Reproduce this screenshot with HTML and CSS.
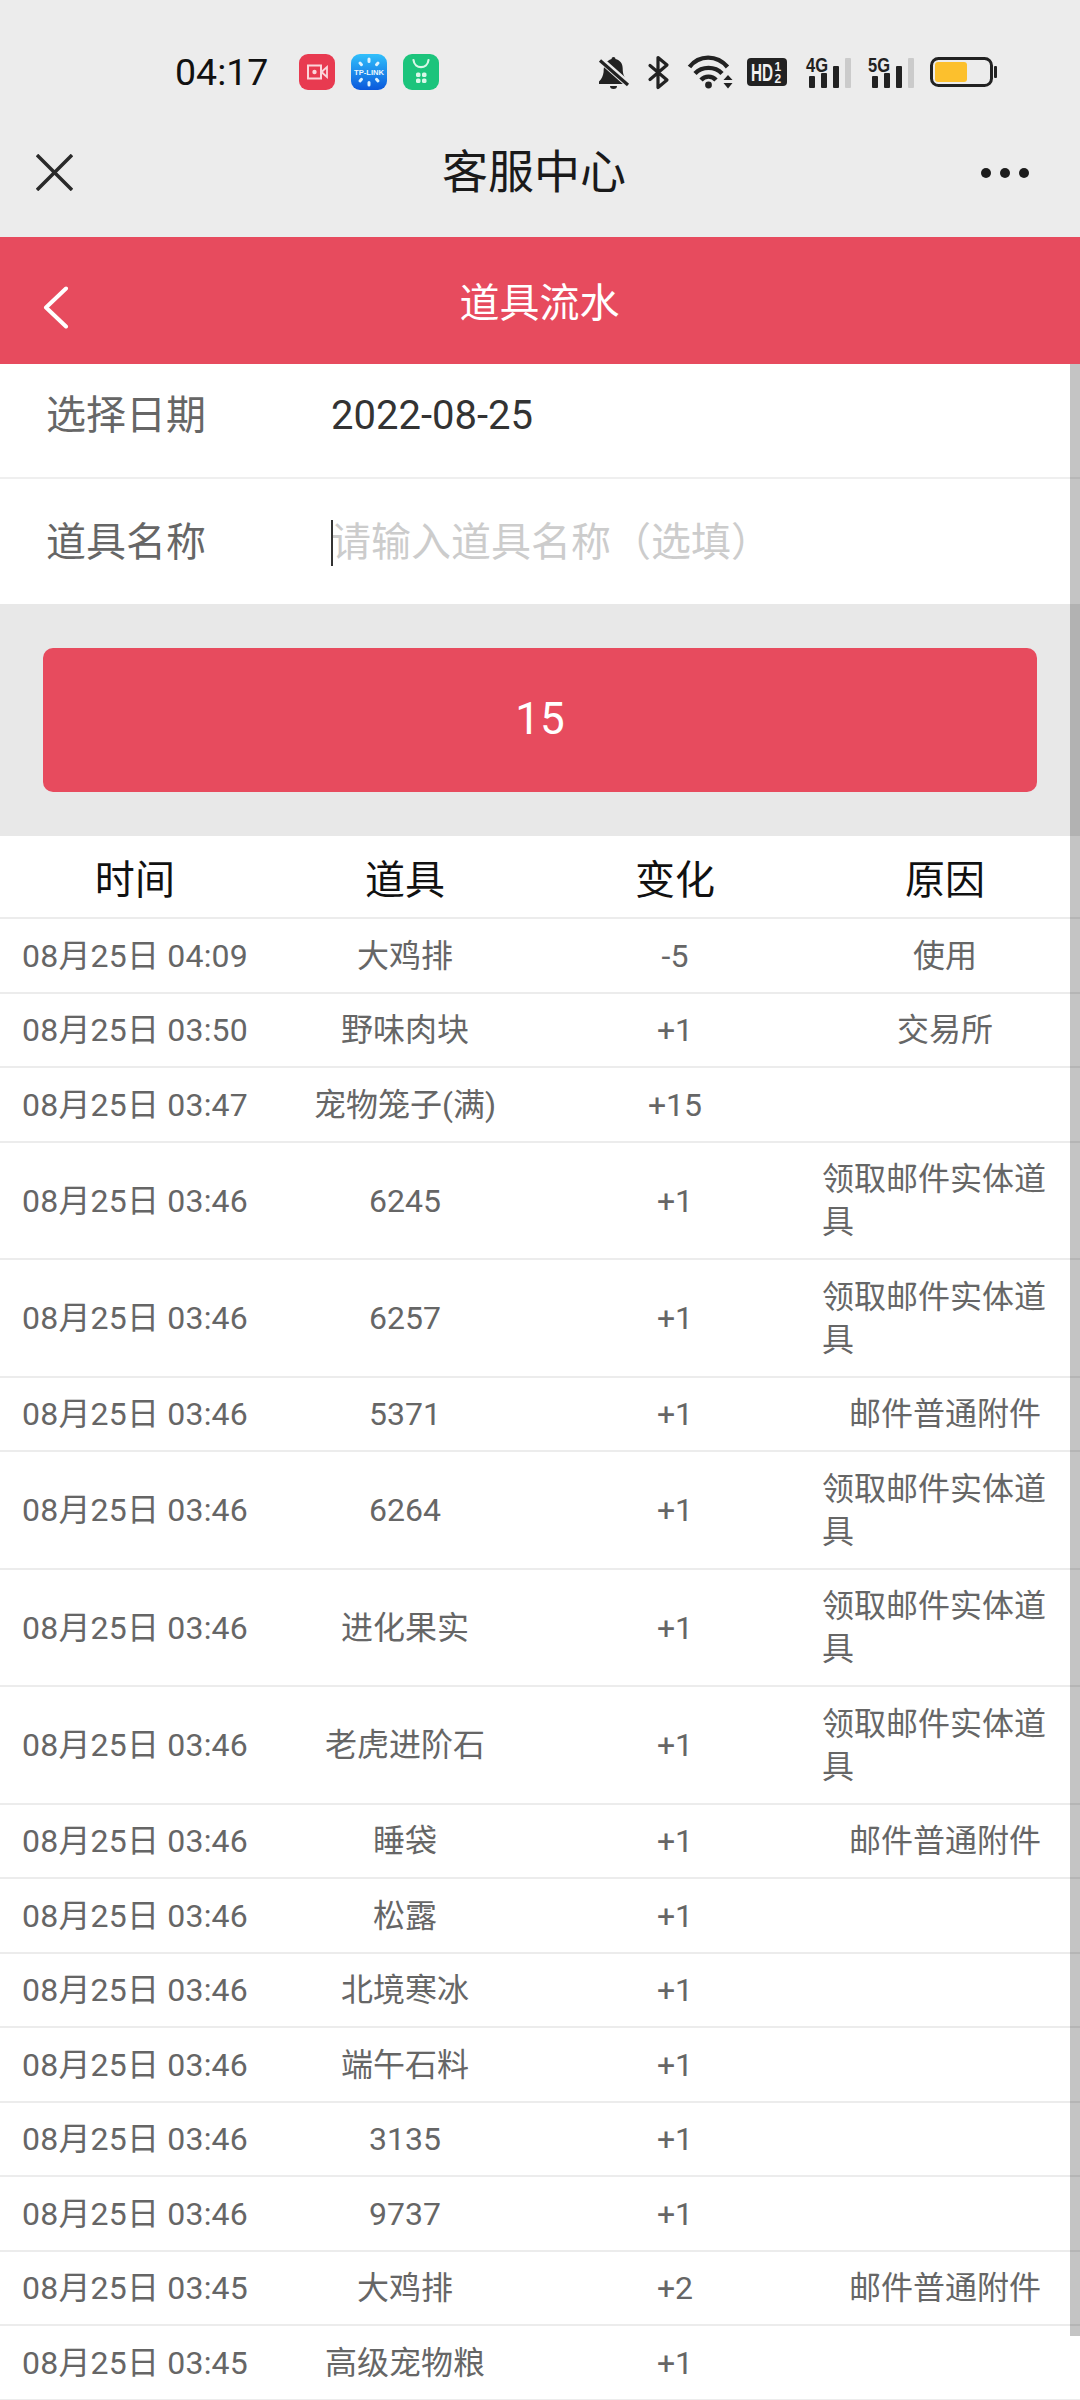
FILE: index.html
```html
<!DOCTYPE html>
<html lang="zh-CN">
<head>
<meta charset="utf-8">
<title>道具流水</title>
<link rel="stylesheet" href="styles.css">
</head>
<body>
<div class="page">
  <header class="chrome">
    <div class="status">
      <div class="status-left">
        <span class="time">04:17</span>
        <svg class="app" viewBox="0 0 36 36"><rect width="36" height="36" rx="9" fill="#e83a50"/><rect x="9" y="11.500" width="13" height="13" fill="none" stroke="#fbd5da" stroke-width="2"/><circle cx="15.500" cy="18" r="2.200" fill="#fbd5da"/><path d="M23.500 17l4.500-4v10l-4.500-4z" fill="none" stroke="#fbd5da" stroke-width="1.800"/></svg>
        <svg class="app" viewBox="0 0 36 36"><defs><linearGradient id="tp" x1="0" y1="0" x2="0" y2="1"><stop offset="0" stop-color="#31c0fb"/><stop offset="1" stop-color="#0a58dc"/></linearGradient></defs><rect width="36" height="36" rx="9" fill="url(#tp)"/><g stroke="#dff3ff" stroke-width="3" stroke-linecap="round"><path d="M18 5v2.500M18 28.500v2.500M9 9l1.500 1.700M27 9l-1.500 1.700M9 27l1.500-1.700M27 27l-1.500-1.700"/></g><text x="18" y="20.500" text-anchor="middle" class="tp-text" textLength="30" lengthAdjust="spacingAndGlyphs">TP-LINK</text></svg>
        <svg class="app" viewBox="0 0 36 36"><rect width="36" height="36" rx="9" fill="#1cc47c"/><path d="M10.500 6c1 9.500 14 9.500 15 0" fill="none" stroke="#d9f7e8" stroke-width="2.200" stroke-linecap="round"/><g fill="#d9f7e8"><rect x="13" y="18.500" width="4.500" height="4.500" rx="1.600"/><rect x="19" y="18.500" width="4.500" height="4.500" rx="1.600"/><rect x="13" y="24.500" width="4.500" height="4.500" rx="1.600"/><rect x="19" y="24.500" width="4.500" height="4.500" rx="1.600"/></g></svg>
      </div>
      <div class="status-right">
        <svg class="ic ic-bell" viewBox="0 0 30 33"><path d="M12.500 3a2 2 0 0 1 4 0c4.500 1 7.200 4.500 7.200 9.500 0 5.500 1.300 9 5.300 13v2.500H0v-2.500c2.800-2.800 4-5.500 4.600-9.500 0-3 .5-6 1.400-8.500 1.500-2 4-3.500 6.500-4.500z" fill="#222"/><path d="M11 30h7a3.500 3 0 0 1-7 0z" fill="#222"/><path d="M-1 1.500L31 30" stroke="#ececec" stroke-width="6.500"/><path d="M1 4.500L29 29" stroke="#222" stroke-width="3.200"/></svg>
        <svg class="ic ic-bt" viewBox="0 0 21 33"><path d="M2 9.500L19 24 10 31.500V1.500L19 9 2 23.500" fill="none" stroke="#222" stroke-width="3.200" stroke-linejoin="round" stroke-linecap="round"/></svg>
        <svg class="ic ic-wifi" viewBox="0 0 45 33"><g fill="none" stroke="#222" stroke-width="4.400"><path d="M1.500 11C11 -1.500 29 -1.500 39.500 11"/><path d="M7 17.500c7-7.500 20-7.500 27 0"/><path d="M13 24c4-4.500 11-4.500 15 0"/></g><circle cx="20.500" cy="29" r="3.400" fill="#222"/><path d="M35.500 24l4.500-5 4.500 5z" fill="#222"/><path d="M35.500 27h9L40 32.500z" fill="#222"/></svg>
        <svg class="ic ic-hd" viewBox="0 0 40 28"><rect width="40" height="28" rx="4" fill="#222"/><text x="4" y="22.500" class="hd-text" textLength="22" lengthAdjust="spacingAndGlyphs">HD</text><text x="27.500" y="13" class="hd-small">1</text><text x="27.500" y="24.500" class="hd-small">2</text></svg>
        <svg class="ic ic-net" viewBox="0 0 46 33"><text x="0" y="15.500" class="net-text" textLength="22" lengthAdjust="spacingAndGlyphs">4G</text><g fill="#222"><rect x="3" y="20" width="6" height="12" rx="1"/><rect x="15" y="17" width="6" height="15" rx="1"/><rect x="27" y="10" width="6" height="22" rx="1"/></g><rect x="39" y="2" width="6" height="30" rx="1" fill="#cbcbcb"/></svg>
        <svg class="ic ic-net" viewBox="0 0 46 33"><text x="0" y="15.500" class="net-text" textLength="22" lengthAdjust="spacingAndGlyphs">5G</text><g fill="#222"><rect x="4" y="20" width="6" height="12" rx="1"/><rect x="16" y="17" width="6" height="15" rx="1"/><rect x="28" y="10" width="6" height="22" rx="1"/></g><rect x="40" y="2" width="6" height="30" rx="1" fill="#cbcbcb"/></svg>
        <svg class="ic ic-batt" viewBox="0 0 67 30"><rect x="1.500" y="1.500" width="60" height="27" rx="7" fill="none" stroke="#222" stroke-width="3"/><rect x="5" y="5" width="32" height="20" rx="3" fill="#fcc02d"/><rect x="64" y="9" width="3" height="12" rx="1" fill="#222"/></svg>
      </div>
    </div>
    <nav class="navbar">
      <svg class="nav-close" viewBox="0 0 37 37"><path d="M1 1l35 35M36 1L1 36" stroke="#2a2a2a" stroke-width="3.500"/></svg>
      <h1 class="nav-title">客服中心</h1>
      <div class="nav-dots"><i></i><i></i><i></i></div>
    </nav>
  </header>

  <div class="appbar">
    <svg class="back" viewBox="0 0 26 43"><path d="M23 2.500L3 21.500l20 19" fill="none" stroke="#fff" stroke-width="4" stroke-linecap="round" stroke-linejoin="round"/></svg>
    <h2 class="appbar-title">道具流水</h2>
  </div>

  <section class="form">
    <div class="field field-date">
      <span class="label">选择日期</span>
      <span class="value">2022-08-25</span>
    </div>
    <div class="field field-name">
      <span class="label">道具名称</span>
      <span class="value placeholder"><i class="caret"></i>请输入道具名称（选填）</span>
    </div>
  </section>

  <div class="band">
    <div class="btn">15</div>
  </div>

  <section class="list">
    <div class="row head"><span>时间</span><span>道具</span><span>变化</span><span>原因</span></div>
    <div class="row"><span>08月25日 04:09</span><span>大鸡排</span><span>-5</span><span>使用</span></div>
    <div class="row"><span>08月25日 03:50</span><span>野味肉块</span><span>+1</span><span>交易所</span></div>
    <div class="row"><span>08月25日 03:47</span><span>宠物笼子(满)</span><span>+15</span><span></span></div>
    <div class="row"><span>08月25日 03:46</span><span>6245</span><span>+1</span><span><b class="why">领取邮件实体道具</b></span></div>
    <div class="row"><span>08月25日 03:46</span><span>6257</span><span>+1</span><span><b class="why">领取邮件实体道具</b></span></div>
    <div class="row"><span>08月25日 03:46</span><span>5371</span><span>+1</span><span>邮件普通附件</span></div>
    <div class="row"><span>08月25日 03:46</span><span>6264</span><span>+1</span><span><b class="why">领取邮件实体道具</b></span></div>
    <div class="row"><span>08月25日 03:46</span><span>进化果实</span><span>+1</span><span><b class="why">领取邮件实体道具</b></span></div>
    <div class="row"><span>08月25日 03:46</span><span>老虎进阶石</span><span>+1</span><span><b class="why">领取邮件实体道具</b></span></div>
    <div class="row"><span>08月25日 03:46</span><span>睡袋</span><span>+1</span><span>邮件普通附件</span></div>
    <div class="row"><span>08月25日 03:46</span><span>松露</span><span>+1</span><span></span></div>
    <div class="row"><span>08月25日 03:46</span><span>北境寒冰</span><span>+1</span><span></span></div>
    <div class="row"><span>08月25日 03:46</span><span>端午石料</span><span>+1</span><span></span></div>
    <div class="row"><span>08月25日 03:46</span><span>3135</span><span>+1</span><span></span></div>
    <div class="row"><span>08月25日 03:46</span><span>9737</span><span>+1</span><span></span></div>
    <div class="row"><span>08月25日 03:45</span><span>大鸡排</span><span>+2</span><span>邮件普通附件</span></div>
    <div class="row"><span>08月25日 03:45</span><span>高级宠物粮</span><span>+1</span><span></span></div>
  </section>

  <div class="scrollbar"></div>
</div>
</body>
</html>
```
FILE: styles.css
```css
* { box-sizing: border-box; }
html, body { margin: 0; padding: 0; height: 2400px; overflow: hidden; background: #fff; }
body { font-family: Roboto, "Noto Sans CJK SC", "Noto Sans", sans-serif; }
.page { position: relative; width: 1080px; height: 2400px; overflow: hidden; }

/* system chrome */
.chrome { height: 237px; background: #ececec; }
.status { height: 108px; padding: 54px 83px 0 175px; display: flex; justify-content: space-between; align-items: flex-start; }
.status-left { display: flex; align-items: center; height: 36px; }
.time { font-size: 37.500px; line-height: 36px; color: #111; width: 94px; margin-right: 30px; }
.app { width: 36px; height: 36px; margin-right: 16px; display: block; }
.app:last-child { margin-right: 0; }
.tp-text { font: 700 7.500px "Liberation Sans", sans-serif; fill: #eaf7ff; }
.status-right { display: flex; align-items: center; height: 36px; }
.ic { display: block; flex: none; overflow: visible; }
.ic-bell { width: 30px; height: 33px; margin-right: 19px; }
.ic-bt { width: 21px; height: 33px; margin-right: 19px; }
.ic-wifi { width: 45px; height: 33px; margin-right: 14px; }
.ic-hd { width: 40px; height: 28px; margin-right: 19px; }
.ic-net { width: 46px; height: 33px; margin-right: 16px; }
.ic-batt { width: 67px; height: 30px; }
.hd-text { font: 700 24px "Liberation Sans", sans-serif; fill: #f2f2f2; }
.hd-small { font: 700 12px "Liberation Sans", sans-serif; fill: #f2f2f2; }
.net-text { font: 700 20px "Liberation Sans", sans-serif; fill: #222; }

.navbar { height: 129px; padding: 0 51px 0 36px; display: flex; align-items: center; justify-content: space-between; position: relative; }
.nav-close { width: 37px; height: 37px; display: block; }
.nav-title { position: absolute; left: 442px; top: 19px; margin: 0; font-size: 46px; line-height: 90px; font-weight: 400; color: #1a1a1a; }
.nav-dots { display: flex; gap: 9px; }
.nav-dots i { width: 10px; height: 10px; border-radius: 50%; background: #1c1c1c; }

/* red title bar */
.appbar { height: 127px; background: #e74b5e; display: flex; align-items: center; justify-content: center; position: relative; padding: 7px 1px 0 0; }
.back { position: absolute; left: 43px; top: 49px; width: 26px; height: 43px; }
.appbar-title { margin: 0; font-size: 40px; font-weight: 400; line-height: 50px; color: #fff; }

/* form */
.form { background: #fff; }
.field { display: flex; align-items: center; padding-left: 46px; font-size: 40px; line-height: 50px; }
.field-date { height: 115px; padding-bottom: 10px; border-bottom: 2px solid #efefef; }
.field-name { height: 125px; padding-top: 2px; }
.label { width: 285px; color: #666; flex: none; }
.value { color: #333; }
.placeholder { color: #ccc; position: relative; }
.caret { position: absolute; left: 0; top: 2px; width: 2px; height: 46px; background: #333; }

.band { background: #e8e8e8; padding: 44px 43px; height: 232px; }
.btn { height: 144px; border-radius: 10px; background: #e74b5e; color: #fff; font-size: 44px; display: flex; align-items: center; justify-content: center; padding-bottom: 2px; }

/* list */
.row { display: grid; grid-template-columns: repeat(4, 270px); align-items: center; text-align: center; font-size: 32px; line-height: 43px; color: #666; padding: 15.750px 0 13.750px; border-bottom: 2px solid #ececec; white-space: normal; }
.row > span { padding: 0 12px; }
.row > span:first-child { padding: 0; white-space: nowrap; letter-spacing: 0.2px; }
.head { height: 83px; padding: 7px 0 0; font-size: 40px; color: #111; }
.why { display: inline-block; font-weight: 400; text-align: left; }

.scrollbar { position: absolute; left: 1070px; top: 364px; width: 10px; height: 1972px; background: rgba(0, 0, 0, 0.23); }
```
